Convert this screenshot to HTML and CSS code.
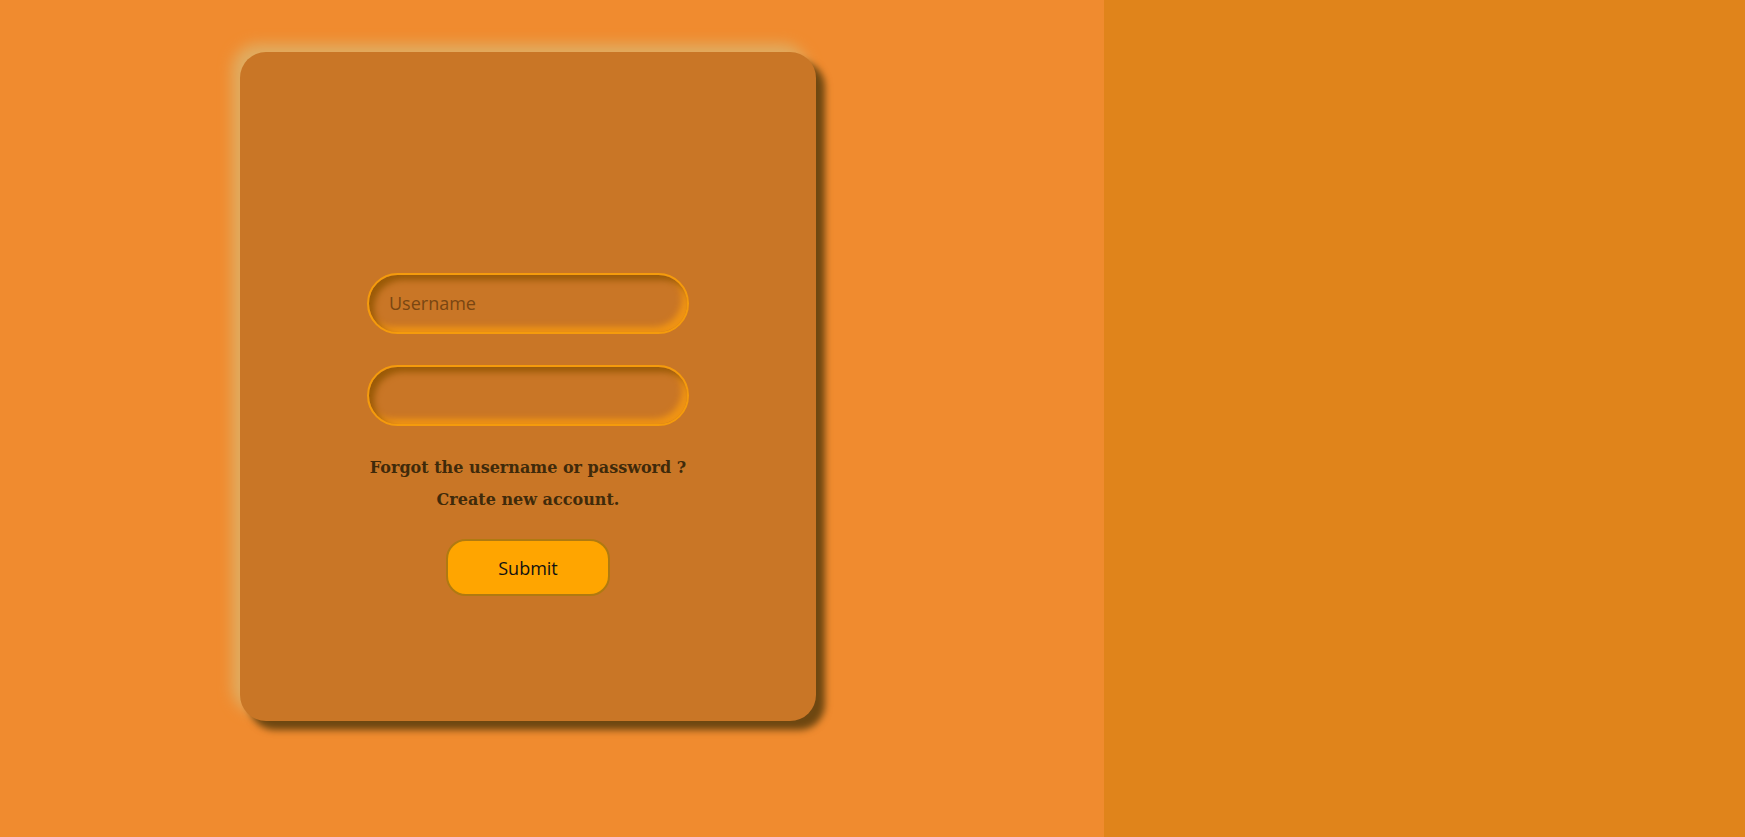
FILE: index.html
```html
<!DOCTYPE html>
<html lang="en">
<head>
<meta charset="utf-8">
<title>Login</title>
<link rel="stylesheet" href="styles.css">
</head>
<body>
<div class="page">
  <section class="left">
    <form class="card">
      <input class="field" type="text" placeholder="Username">
      <input class="field field-2" type="password">
      <p class="link first">Forgot the username or password ?</p>
      <p class="link">Create new account.</p>
      <button class="submit" type="button">Submit</button>
    </form>
  </section>
  <section class="right"></section>
</div>
</body>
</html>
```
FILE: styles.css
```css
html, body {
  margin: 0;
  padding: 0;
  height: 100%;
}
body {
  background: #f08b2f;
  overflow: hidden;
}
.page {
  display: flex;
  height: 837px;
}
.left {
  width: 1104px;
  flex: none;
  background: #f08b2f;
  padding: 52px 0 0 240px;
  box-sizing: border-box;
}
.right {
  flex: 1;
  background: #e0841b;
}
.card {
  width: 576px;
  height: 669px;
  box-sizing: border-box;
  background: #c97626;
  border-radius: 26px;
  box-shadow: 9px 9px 7px #6e4711, -8px -8px 14px #e0ad62;
  display: flex;
  flex-direction: column;
  align-items: center;
  padding-top: 221px;
  margin: 0;
}
.field {
  width: 322px;
  height: 61px;
  box-sizing: border-box;
  border: 2px solid #f59b0c;
  border-radius: 31px;
  background: #c97626;
  box-shadow: inset 5px 5px 6px #9a5a07, inset -5px -5px 6px #f09414;
  padding: 0 20px 2px;
  font-family: "Open Sans", "Noto Sans", sans-serif;
  font-size: 18px;
  color: #6e3f0c;
  outline: none;
  margin: 0;
}
.field::placeholder {
  color: #7a4612;
}
.field-2 {
  margin-top: 31px;
}
.link {
  margin: 0;
  font-family: "DejaVu Serif", serif;
  font-weight: bold;
  font-size: 16px;
  color: #3f2a0a;
  line-height: 32px;
}
.link.first {
  margin-top: 26px;
}
.submit {
  margin-top: 23px;
  width: 164px;
  height: 57px;
  box-sizing: border-box;
  border: 2px solid #b07a10;
  border-radius: 20px;
  background: #ffa500;
  font-family: "Open Sans", "Noto Sans", sans-serif;
  font-size: 18px;
  color: #111;
  padding: 0;
}
```
